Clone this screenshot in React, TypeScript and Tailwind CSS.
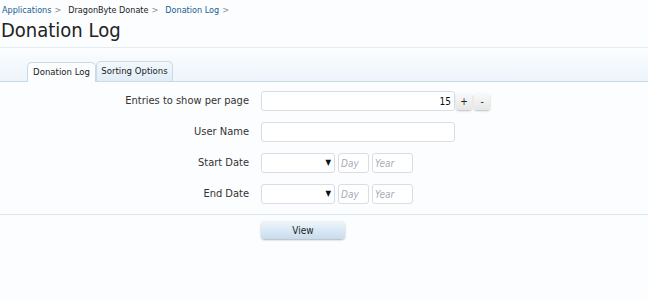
import React from "react";

const font = { fontFamily: '"DejaVu Sans Condensed", "DejaVu Sans", Tahoma, sans-serif', fontStretch: "condensed" as const };

function Row({ label, children }: { label: string; children: React.ReactNode }) {
  return (
    <div className="flex items-center h-[20px]">
      <div className="w-[249px] text-right text-[11px] text-[#333]">{label}</div>
      <div className="ml-[12px] flex items-center">{children}</div>
    </div>
  );
}

function DateInputs() {
  return (
    <>
      <div className="w-[74px] h-[20px] border border-[#d8dee3] rounded-[3px] bg-white flex items-center justify-end pr-[3px] text-[8px] text-[#111]">▼</div>
      <div className="ml-[3px] w-[31px] h-[20px] border border-[#d8dee3] rounded-[3px] bg-white flex items-center pl-[2px] text-[10px] italic text-[#aab]">Day</div>
      <div className="ml-[3px] w-[41px] h-[20px] border border-[#d8dee3] rounded-[3px] bg-white flex items-center pl-[2px] text-[10px] italic text-[#aab]">Year</div>
    </>
  );
}

export default function App() {
  return (
    <div className="w-[648px] h-[300px] bg-[#fcfdfe] overflow-hidden" style={font}>
      <div className="pl-[2px] pt-[4px] text-[9px] h-[16px] leading-[12px] flex">
        <span className="text-[#176093]">Applications</span>
        <span className="text-[#888] ml-[3px]">&gt;</span>
        <span className="text-[#222] ml-[7px]">DragonByte Donate</span>
        <span className="text-[#888] ml-[3px]">&gt;</span>
        <span className="text-[#176093] ml-[7px]">Donation Log</span>
        <span className="text-[#888] ml-[3px]">&gt;</span>
      </div>
      <div className="pl-[1px] text-[20px] leading-[29px] text-[#222]">Donation Log</div>
      <div className="h-[3px] border-b border-[#e2ecf3]"></div>
      <div className="h-[34px] bg-gradient-to-b from-[#fcfdfe] to-[#edf5fb] border-b border-[#c9dbe8] flex items-end pl-[27px]">
        <div className="h-[20px] w-[69px] bg-[#fcfdfe] border border-b-0 border-[#c9dbe8] rounded-t-[5px] text-[9.5px] text-[#222] flex items-center justify-center -mb-px">Donation Log</div>
        <div className="h-[20px] w-[77px] bg-gradient-to-b from-[#f3f8fc] to-[#dfedf7] border border-b-0 border-[#c9dbe8] rounded-t-[5px] text-[9.5px] text-[#222] flex items-center justify-center">Sorting Options</div>
      </div>
      <div className="pt-[9px] flex flex-col gap-[11px]">
        <Row label="Entries to show per page">
          <div className="w-[194px] h-[20px] border border-[#d8dee3] rounded-[3px] bg-white flex items-center justify-end pr-[3px] text-[10px] text-[#111]">15</div>
          <div className="ml-[1px] w-[16px] h-[17px] rounded-[3px] bg-gradient-to-b from-[#fafafa] to-[#e6e6e6] shadow-[0_1px_2px_rgba(0,0,0,0.25)] flex items-center justify-center text-[10px] text-[#222]">+</div>
          <div className="ml-[2px] w-[16px] h-[17px] rounded-[3px] bg-gradient-to-b from-[#fafafa] to-[#e6e6e6] shadow-[0_1px_2px_rgba(0,0,0,0.25)] flex items-center justify-center text-[10px] text-[#222]">-</div>
        </Row>
        <Row label="User Name">
          <div className="w-[194px] h-[20px] border border-[#d8dee3] rounded-[3px] bg-white"></div>
        </Row>
        <Row label="Start Date">
          <DateInputs />
        </Row>
        <Row label="End Date">
          <DateInputs />
        </Row>
      </div>
      <div className="mt-[10px] h-0 border-t border-[#dbe8f1]"></div>
      <div className="pt-[6px] pl-[261px]">
        <div className="w-[84px] h-[18px] rounded-[4px] bg-gradient-to-b from-[#eef5fb] to-[#c7dcee] shadow-[0_1px_2px_rgba(0,0,0,0.3)] flex items-center justify-center text-[10px] text-[#222]">View</div>
      </div>
    </div>
  );
}
